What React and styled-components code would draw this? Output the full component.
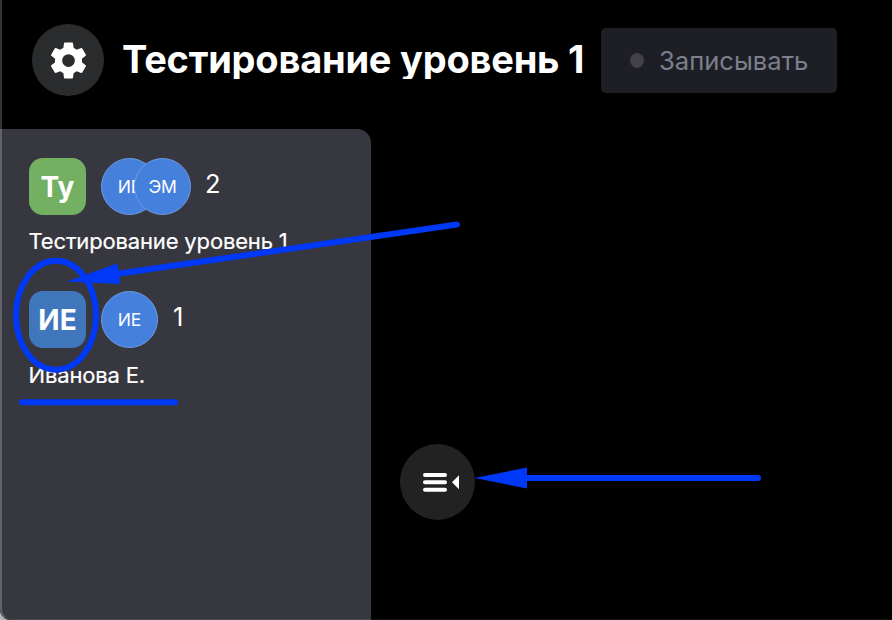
import React from "react";
import styled, { createGlobalStyle } from "styled-components";

const GlobalStyle = createGlobalStyle`
  * { box-sizing: border-box; }
  html, body { margin: 0; background: #b4b4b6; }
  body { font-family: Inter, "Liberation Sans", sans-serif; font-weight: 400; color: #fff; }
`;

const Window = styled.div`
  position: relative;
  display: flex;
  flex-direction: column;
  width: 892px;
  height: 620px;
  overflow: hidden;
  background: #000;
  border-bottom-left-radius: 11px;
`;

const WindowEdge = styled.div`
  position: absolute;
  inset: -2px -20px 0 0;
  border-left: 2px solid rgba(255, 255, 255, 0.21);
  border-bottom: 1px solid rgba(255, 255, 255, 0.08);
  border-bottom-left-radius: 11px;
  pointer-events: none;
`;

const Header = styled.header`
  display: flex;
  align-items: flex-start;
  height: 129px;
  padding: 24px 0 0 32px;
`;

const SettingsButton = styled.button`
  display: grid;
  place-items: center;
  width: 72px;
  height: 72px;
  padding: 0;
  border: 0;
  border-radius: 50%;
  background: #2b2c2e;
  color: #fff;
`;

const Title = styled.h1`
  width: 478px;
  height: 46px;
  margin: 9px 0 0 19px;
  overflow: hidden;
  font-size: 38px;
  font-weight: 700;
  line-height: 52px;
  letter-spacing: -0.22px;
  text-indent: -1px;
  white-space: nowrap;
`;

const RecordButton = styled.button`
  display: flex;
  align-items: center;
  gap: 15px;
  width: 236px;
  height: 65px;
  margin: 4px 0 0;
  padding: 0 0 0 29px;
  border: 0;
  border-radius: 5px;
  background: #1e1f24;
  color: #7c7f8f;
  font: 400 25.6px/32px Inter, sans-serif;
  white-space: nowrap;
`;

const RecordDot = styled.span`
  width: 14px;
  height: 15px;
  border-radius: 50%;
  background: #424147;
`;

const Body = styled.div`
  display: flex;
  flex: 1;
`;

const Sidebar = styled.aside`
  width: 371px;
  padding: 29px 0 0 29px;
  border-top-right-radius: 14px;
  background: #373740;
`;

const Room = styled.section`
  height: 133px;
`;

const RoomRow = styled.div`
  display: flex;
  height: 57px;
`;

const RoomTile = styled.div`
  width: 57px;
  height: 57px;
  margin-right: 15px;
  border-radius: 14px;
  background: ${(p) => p.$color};
  font-size: 28px;
  font-weight: 700;
  line-height: 58px;
  text-align: center;
`;

const Avatar = styled.div`
  width: 57px;
  height: 57px;
  border: 1px solid #6d9be5;
  border-radius: 50%;
  background: #4580dc;
  font-size: 17.5px;
  letter-spacing: -0.2px;
  line-height: 56px;
  text-align: center;

  & + & { margin-left: -24px; }
`;

const Count = styled.span`
  margin-left: ${(p) => p.$gap}px;
  font-size: 25.5px;
  line-height: 52px;
`;

const RoomName = styled.div`
  margin-top: ${(p) => p.$gap}px;
  font-size: 22px;
  line-height: 28px;
  letter-spacing: -0.16px;
  text-indent: -0.5px;
  white-space: nowrap;
  -webkit-text-stroke: 0.2px #fff;
`;

const Stage = styled.main`
  flex: 1;
  padding: 315px 0 0 29px;
`;

const CollapseButton = styled.button`
  display: block;
  width: 75px;
  height: 76px;
  padding: 0;
  border: 0;
  border-radius: 50%;
  background: #222;
  color: #fff;
`;

const Annotations = styled.svg`
  position: absolute;
  left: 0;
  top: 0;
  pointer-events: none;
`;

const rooms = [
  { short: "Ту", name: "Тестирование уровень 1", color: "#74b062", people: ["ИЕ", "ЭМ"], gap: 12, countGap: 14 },
  { short: "ИЕ", name: "Иванова Е.", color: "#4076bc", people: ["ИЕ"], gap: 13, countGap: 15 },
];

function GearIcon() {
  return (
    <svg width="45" height="45" viewBox="0 0 24 24" fill="currentColor">
      <path d="M19.14 12.94c.04-.3.06-.61.06-.94 0-.32-.02-.64-.07-.94l2.03-1.58a.49.49 0 0 0 .12-.61l-1.92-3.32a.49.49 0 0 0-.59-.22l-2.39.96c-.5-.38-1.03-.7-1.62-.94l-.36-2.54a.48.48 0 0 0-.48-.41h-3.84c-.24 0-.43.17-.47.41l-.36 2.54c-.59.24-1.13.57-1.62.94l-2.39-.96a.48.48 0 0 0-.59.22L2.74 8.87c-.12.21-.08.47.12.61l2.03 1.58c-.05.3-.09.63-.09.94s.02.64.07.94l-2.03 1.58a.49.49 0 0 0-.12.61l1.92 3.32c.12.22.37.29.59.22l2.39-.96c.5.38 1.03.7 1.62.94l.36 2.54c.05.24.24.41.48.41h3.84c.24 0 .44-.17.47-.41l.36-2.54c.59-.24 1.13-.56 1.62-.94l2.39.96c.22.08.47 0 .59-.22l1.92-3.32a.48.48 0 0 0-.12-.61l-2.01-1.58ZM12 15.4a3.4 3.4 0 1 1 0-6.8 3.4 3.4 0 0 1 0 6.8Z" />
    </svg>
  );
}

function CollapseIcon() {
  return (
    <svg width="75" height="76" viewBox="0 0 75 76" fill="currentColor">
      <rect x="23" y="29" width="24" height="4" rx="2" />
      <rect x="23" y="36.3" width="24" height="4" rx="2" />
      <rect x="23" y="43.7" width="24" height="4" rx="2" />
      <path d="M52 38.3 59 31.3V45.3Z" />
    </svg>
  );
}

export default function App() {
  return (
    <>
      <GlobalStyle />
      <Window>
        <Header>
          <SettingsButton aria-label="Настройки"><GearIcon /></SettingsButton>
          <Title>Тестирование уровень 1</Title>
          <RecordButton><RecordDot />Записывать</RecordButton>
        </Header>
        <Body>
          <Sidebar>
            {rooms.map((room) => (
              <Room key={room.name}>
                <RoomRow>
                  <RoomTile $color={room.color}>{room.short}</RoomTile>
                  {room.people.map((p) => <Avatar key={p}>{p}</Avatar>)}
                  <Count $gap={room.countGap}>{room.people.length}</Count>
                </RoomRow>
                <RoomName $gap={room.gap}>{room.name}</RoomName>
              </Room>
            ))}
          </Sidebar>
          <Stage>
            <CollapseButton aria-label="Свернуть"><CollapseIcon /></CollapseButton>
          </Stage>
        </Body>
        <WindowEdge />
        <Annotations width="892" height="620" fill="none" stroke="#0038f8" strokeWidth="6" strokeLinecap="round">
          <ellipse cx="56" cy="315.3" rx="40" ry="54.5" />
          <path d="M457 224.5 118 273.7" />
          <path d="M67 281.5 117.5 263.5 120 284Z" fill="#0038f8" stroke="none" />
          <path d="M22 402.3H175" />
          <path d="M758 478H525" />
          <path d="M474.5 478 527 467.5V488.5Z" fill="#0038f8" stroke="none" />
        </Annotations>
      </Window>
    </>
  );
}
